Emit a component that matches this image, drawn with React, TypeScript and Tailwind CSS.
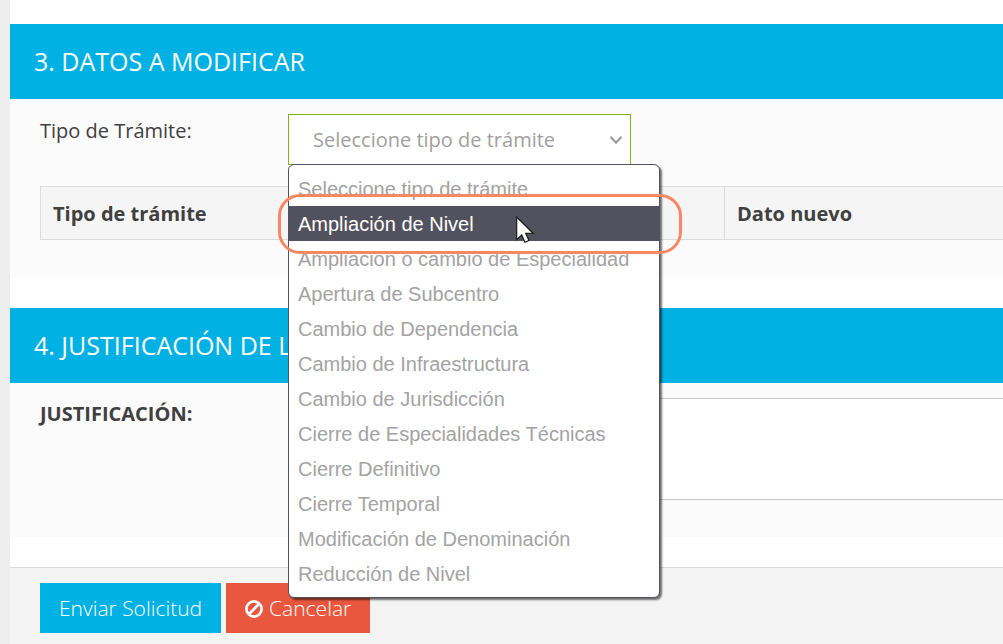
import type { ReactNode } from 'react';

const placeholder = 'Seleccione tipo de trámite';

const options = [
  placeholder,
  'Ampliación de Nivel',
  'Ampliación o cambio de Especialidad',
  'Apertura de Subcentro',
  'Cambio de Dependencia',
  'Cambio de Infraestructura',
  'Cambio de Jurisdicción',
  'Cierre de Especialidades Técnicas',
  'Cierre Definitivo',
  'Cierre Temporal',
  'Modificación de Denominación',
  'Reducción de Nivel',
];

const active = 'Ampliación de Nivel';

function Section({ title, children }: { title: string; children: ReactNode }) {
  return (
    <section>
      <h2 className="flex h-[75px] items-center overflow-hidden bg-[#02b1e3] px-6 pt-px text-[25px] whitespace-nowrap text-white">
        {title}
      </h2>
      <div className="bg-[#fbfbfb] pt-[15px] pb-[37px] pl-[30px]">{children}</div>
    </section>
  );
}

function BanIcon() {
  return (
    <svg viewBox="0 0 18 18" className="size-[18px] fill-none stroke-current" strokeWidth="2.7" aria-hidden="true">
      <circle cx="9" cy="9" r="7.6" />
      <path d="M3.8 14.2 14.2 3.8" />
    </svg>
  );
}

function Pointer() {
  return (
    <svg viewBox="0 0 19 28" className="absolute top-[10px] left-[227px] h-7 w-[19px]" aria-hidden="true">
      <path
        d="M.7 1v22.6l5-4.6 3.2 7.3 4-1.8-3.2-7.2h7.4z"
        fill="#fff"
        stroke="#111"
        strokeWidth="1.1"
        strokeLinejoin="miter"
      />
    </svg>
  );
}

function OptionList() {
  return (
    <ul
      role="listbox"
      aria-label="Tipo de Trámite"
      className="absolute top-[50px] left-0 z-10 w-[372px] rounded-md border border-[#52525e] bg-white py-[6px] font-['Liberation_Sans',Arial,sans-serif] text-[20px] leading-[33px] text-[#a3a3a3] shadow-[2px_2px_2px_rgba(0,0,0,0.55)]"
    >
      {options.map((option) =>
        option === active ? (
          <li key={option} role="option" aria-selected="true" className="relative bg-[#52525e] px-[9px] pt-[2px] text-white">
            {option}
            <Pointer />
            <span className="pointer-events-none absolute -top-3 -right-[23px] -bottom-[13px] -left-[11px] z-10 rounded-[22px] border-3 border-[#f58762]" />
          </li>
        ) : (
          <li key={option} role="option" aria-selected="false" className="px-[9px] pt-[2px]">
            {option}
          </li>
        ),
      )}
    </ul>
  );
}

export default function App() {
  return (
    <main className="min-h-screen overflow-hidden border-l-10 border-[#ededed] bg-white font-['Open_Sans',sans-serif] text-[20px] text-[#404040]">
      <form className="flex min-h-screen flex-col gap-[30px] pt-6" onSubmit={(e) => e.preventDefault()}>
        <Section title="3. DATOS A MODIFICAR">
          <div className="flex">
            <label htmlFor="tipo" className="w-[248px] shrink-0 pt-1 leading-[26px]">
              Tipo de Trámite:
            </label>
            <div className="relative w-[343px]">
              <select
                id="tipo"
                defaultValue={placeholder}
                className="block h-[51px] w-full appearance-none border border-[#80b512] bg-white px-6 text-[#a0a0a0] outline-none"
              >
                {options.map((option) => (
                  <option key={option}>{option}</option>
                ))}
              </select>
              <svg
                viewBox="0 0 14 10"
                className="pointer-events-none absolute top-[21px] right-2 h-[10px] w-[14px] fill-none stroke-[#999]"
                strokeWidth="2"
                aria-hidden="true"
              >
                <path d="m1.5 1.8 5.5 6 5.5-6" />
              </svg>
              <OptionList />
            </div>
          </div>
          <table className="mt-[21px] mb-px w-full table-fixed border-collapse text-left">
            <thead>
              <tr className="h-[53px] border-y border-[#dcdcdc] bg-[#f5f5f5]">
                <th className="w-[342px] border-l border-[#dcdcdc] px-3 pt-[2px] font-bold">Tipo de trámite</th>
                <th className="w-[342px] border-l border-[#dcdcdc] px-3 pt-[2px]" />
                <th className="border-l border-[#dcdcdc] px-3 pt-[2px] font-bold">Dato nuevo</th>
              </tr>
            </thead>
          </table>
        </Section>

        <Section title="4. JUSTIFICACIÓN DE L">
          <div className="flex">
            <label htmlFor="justificacion" className="w-[248px] shrink-0 pt-[3px] leading-[26px] font-bold">
              JUSTIFICACIÓN:
            </label>
            <textarea
              id="justificacion"
              className="block h-[102px] grow resize-none border border-r-0 border-[#c8c8c8] bg-white p-3 outline-none"
            />
          </div>
        </Section>

        <footer className="flex grow items-start gap-[5px] border-t border-[#dcdcdc] bg-[#f4f4f4] px-[30px] pt-[15px] text-[21px] font-light text-white">
          <button type="submit" className="h-[50px] bg-[#02b1e3] px-[19px] pt-px">
            Enviar Solicitud
          </button>
          <button type="button" className="flex h-[50px] items-center gap-[6px] bg-[#e9573f] px-[19px] pt-px">
            <BanIcon />
            Cancelar
          </button>
        </footer>
      </form>
    </main>
  );
}
